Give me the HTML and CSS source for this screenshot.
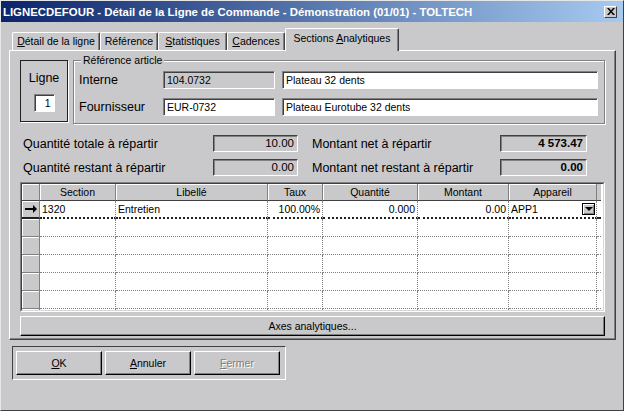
FILE: index.html
```html
<!DOCTYPE html>
<html lang="fr">
<head>
    <meta charset="UTF-8">
    <link rel="stylesheet" href="styles.css">
    <title>LIGNECDEFOUR</title>
</head>
<body>
<div class="window">
    <div class="titlebar">
        <span class="title">LIGNECDEFOUR - Détail de la Ligne de Commande - Démonstration (01/01) - TOLTECH</span>
        <span class="close">
            <svg width="8" height="7" viewBox="0 0 8 7"><path d="M0 0 L2 0 L4 2.5 L6 0 L8 0 L5 3.5 L8 7 L6 7 L4 4.5 L2 7 L0 7 L3 3.5 Z" fill="#000"/></svg>
        </span>
    </div>

    <div class="tabs">
        <div class="tab t1"><u>D</u>étail de la ligne</div>
        <div class="tab t2">Référence</div>
        <div class="tab t3"><u>S</u>tatistiques</div>
        <div class="tab t4"><u>C</u>adences</div>
        <div class="tab t5 active">Sections <u>A</u>nalytiques</div>
    </div>

    <div class="panel">
        <div class="top-row">
            <div class="ligne-box">
                <span class="big-label">Ligne</span>
                <div class="field ligne-num">1</div>
            </div>
            <div class="ref-group">
                <span class="caption">Référence article</span>
                <div class="ref-row">
                    <span class="big-label ref-label">Interne</span>
                    <div class="field disabled code">104.0732</div>
                    <div class="field desc">Plateau 32 dents</div>
                </div>
                <div class="ref-row">
                    <span class="big-label ref-label">Fournisseur</span>
                    <div class="field code">EUR-0732</div>
                    <div class="field desc">Plateau Eurotube 32 dents</div>
                </div>
            </div>
        </div>

        <div class="totals">
            <span class="big-label">Quantité totale à répartir</span>
            <div class="total-box">10.00</div>
            <span class="big-label second">Montant net à répartir</span>
            <div class="total-box strong">4 573.47</div>
            <span class="big-label">Quantité restant à répartir</span>
            <div class="total-box">0.00</div>
            <span class="big-label second">Montant net restant à répartir</span>
            <div class="total-box strong">0.00</div>
        </div>

        <div class="grid-wrap">
            <div class="grid-inner">
                <table class="grid">
                    <colgroup>
                        <col style="width:18px"><col style="width:76px"><col style="width:152px"><col style="width:55px">
                        <col style="width:95px"><col style="width:91px"><col style="width:88px"><col style="width:4px">
                    </colgroup>
                    <thead>
                        <tr>
                            <th></th><th>Section</th><th>Libellé</th><th>Taux</th>
                            <th>Quantité</th><th>Montant</th><th>Appareil</th><th class="filler"></th>
                        </tr>
                    </thead>
                    <tbody>
                        <tr class="current">
                            <td class="sel">
                                <svg class="arrow" width="12" height="8" viewBox="0 0 12 8"><path d="M0 3 H8 V0 L12 4 L8 8 V5 H0 Z" fill="#000"/></svg>
                            </td>
                            <td>1320</td>
                            <td>Entretien</td>
                            <td class="num">100.00%</td>
                            <td class="num">0.000</td>
                            <td class="num">0.00</td>
                            <td><div class="combo"><span>APP1</span><span class="dd"></span></div></td>
                            <td class="filler"></td>
                        </tr>
                        <tr><td class="sel"></td><td></td><td></td><td></td><td></td><td></td><td></td><td class="filler"></td></tr>
                        <tr><td class="sel"></td><td></td><td></td><td></td><td></td><td></td><td></td><td class="filler"></td></tr>
                        <tr><td class="sel"></td><td></td><td></td><td></td><td></td><td></td><td></td><td class="filler"></td></tr>
                        <tr><td class="sel"></td><td></td><td></td><td></td><td></td><td></td><td></td><td class="filler"></td></tr>
                        <tr><td class="sel"></td><td></td><td></td><td></td><td></td><td></td><td></td><td class="filler"></td></tr>
                        <tr><td class="sel"></td><td></td><td></td><td></td><td></td><td></td><td></td><td class="filler"></td></tr>
                    </tbody>
                </table>
            </div>
        </div>

        <div class="btn axes">Axes analytiques...</div>
    </div>

    <div class="btn-group">
        <div class="btn ok"><u>O</u>K</div>
        <div class="btn cancel"><u>A</u>nnuler</div>
        <div class="btn close-btn disabled"><u>F</u>ermer</div>
    </div>
</div>
</body>
</html>
```

FILE: styles.css
```css
* {
    box-sizing: border-box;
}

body {
    margin: 0;
    background-color: #c9c8ca;
    font-family: 'Liberation Sans', Arial, sans-serif;
    font-size: 10.5px;
    color: #000;
}

.window {
    width: 624px;
    height: 411px;
    border: 1px solid;
    border-color: #e6e6e6 #404040 #404040 #e6e6e6;
    overflow: hidden;
}

/* title bar */
.titlebar {
    height: 21px;
    display: flex;
    align-items: center;
    justify-content: space-between;
    background: linear-gradient(to right, #0a246a, #a6caf0);
    padding: 0 6px 0 2px;
}

.title {
    color: #fff;
    font-weight: bold;
    font-size: 11.4px;
}

.close {
    width: 13px;
    height: 12px;
    display: flex;
    align-items: center;
    justify-content: center;
    background-color: #c9c8ca;
    border: 1px solid;
    border-color: #fff #404040 #404040 #fff;
}

/* tabs */
.tabs {
    display: flex;
    align-items: flex-end;
    height: 22px;
    margin-top: 6px;
    padding-left: 11px;
    position: relative;
    z-index: 1;
}

.tab {
    height: 18px;
    line-height: 16px;
    text-align: center;
    border-top: 1px solid #fff;
    border-left: 1px solid #fff;
    border-right: 1px solid #404040;
    border-radius: 2px 2px 0 0;
    box-shadow: inset -1px 0 0 #808080;
    white-space: nowrap;
}

.t1 { width: 88px; }
.t2 { width: 58px; }
.t3 { width: 69px; }
.t4 { width: 58px; }
.t5 { width: 114px; }

.tab.active {
    height: 23px;
    line-height: 19px;
    margin-bottom: -1px;
    background-color: #c9c8ca;
}

/* panel */
.panel {
    margin-left: 8px;
    width: 607px;
    height: 290px;
    border: 1px solid;
    border-color: #fff #404040 #404040 #fff;
    box-shadow: inset -1px -1px 0 #808080;
    overflow: hidden;
}

.big-label {
    font-size: 12.5px;
    white-space: nowrap;
}

.top-row {
    display: flex;
    gap: 5px;
    margin: 9px 0 0 10px;
}

.ligne-box {
    width: 48px;
    height: 62px;
    border: 1px solid #202020;
    box-shadow: 1px 1px 0 #fff;
    display: flex;
    flex-direction: column;
    align-items: center;
}

.ligne-box .big-label {
    margin-top: 10px;
}

.field {
    height: 18px;
    line-height: 16px;
    padding-left: 3px;
    border: 1px solid;
    border-color: #808080 #fff #fff #808080;
    box-shadow: inset 1px 1px 0 #404040;
    background-color: #fff;
    white-space: nowrap;
}

.field.disabled {
    background-color: #c9c8ca;
}

.ligne-num {
    width: 21px;
    margin-top: 9px;
    text-align: right;
    padding-right: 3px;
}

.ref-group {
    position: relative;
    width: 532px;
    height: 64px;
    border: 1px solid #808080;
    box-shadow: 1px 1px 0 #fff, inset 1px 1px 0 #fff;
    padding: 10px 6px 0 5px;
}

.caption {
    position: absolute;
    top: -7px;
    left: 7px;
    padding: 0 2px;
    line-height: 13px;
    background-color: #c9c8ca;
}

.ref-row {
    display: flex;
    align-items: center;
    height: 18px;
    margin-bottom: 9px;
}

.ref-label {
    width: 84px;
}

.field.code {
    width: 112px;
    margin-right: 7px;
}

.field.desc {
    width: 316px;
}

/* totals */
.totals {
    display: grid;
    grid-template-columns: 190px 85px 202px 87px;
    grid-auto-rows: 17px;
    row-gap: 7px;
    align-items: center;
    margin: 11px 0 0 13px;
}

.totals .second {
    padding-left: 14px;
}

.total-box {
    height: 17px;
    line-height: 15px;
    text-align: right;
    padding-right: 3px;
    font-size: 11.5px;
    border: 1px solid;
    border-color: #404040 #fff #fff #404040;
    box-shadow: inset 1px 1px 0 #808080;
}

.total-box.strong {
    font-weight: bold;
}

/* grid */
.grid-wrap {
    margin: 6px 0 0 10px;
    width: 585px;
    height: 130px;
    border: 1px solid;
    border-color: #808080 #fff #fff #808080;
}

.grid-inner {
    height: 128px;
    border: 1px solid;
    border-color: #404040 #d8d8d8 #d8d8d8 #404040;
    background-color: #fff;
    overflow: hidden;
}

.grid {
    table-layout: fixed;
    width: 579px;
    border-collapse: separate;
    border-spacing: 0;
}

.grid th {
    height: 17px;
    padding: 0;
    font-weight: normal;
    text-align: center;
    background-color: #c9c8ca;
    border-right: 1px solid #808080;
    border-bottom: 1px solid #404040;
    box-shadow: inset 1px 1px 0 #fff;
}

.grid th.filler {
    border-right: none;
    box-shadow: none;
}

.grid td {
    height: 18px;
    padding: 0 2px;
    border-right: 1px dotted #808080;
    border-bottom: 1px dotted #808080;
    white-space: nowrap;
    overflow: hidden;
}

.grid td.filler {
    border-right: none;
}

.grid tr.current td {
    border-bottom: 2px dotted #202020;
}

.grid td.sel {
    padding: 0;
    background-color: #c9c8ca;
    border-right: 1px solid #808080;
    border-bottom: 1px solid #808080;
    box-shadow: inset 1px 1px 0 #fff;
    text-align: center;
    line-height: 0;
}

.grid tr.current td.sel {
    border-bottom: 2px solid #202020;
}

.arrow {
    display: inline-block;
}

.grid td.num {
    text-align: right;
}

.combo {
    display: flex;
    align-items: center;
    justify-content: space-between;
}

.dd {
    width: 13px;
    height: 12px;
    margin-right: -1px;
    background-color: #c9c8ca;
    border: 1px solid #000;
    box-shadow: inset 1px 1px 0 #fff, inset -1px -1px 0 #808080;
    display: flex;
    align-items: center;
    justify-content: center;
}

.dd::after {
    content: '';
    border-left: 4px solid transparent;
    border-right: 4px solid transparent;
    border-top: 4px solid #000;
}

/* buttons */
.btn {
    display: flex;
    align-items: center;
    justify-content: center;
    border: 1px solid;
    border-color: #fff #000 #000 #fff;
    box-shadow: inset -1px -1px 0 #808080;
    white-space: nowrap;
}

.btn.axes {
    margin: 4px 0 0 10px;
    width: 585px;
    height: 20px;
}

.btn-group {
    display: flex;
    gap: 3px;
    margin: 6px 0 0 11px;
    width: 274px;
    height: 34px;
    padding: 4px 0 0 3px;
    border: 1px solid;
    border-color: #404040 #fff #fff #404040;
}

.btn-group .btn {
    width: 86px;
    height: 24px;
}

.btn.disabled {
    color: #808080;
    text-shadow: 1px 1px 0 #fff;
}
```
